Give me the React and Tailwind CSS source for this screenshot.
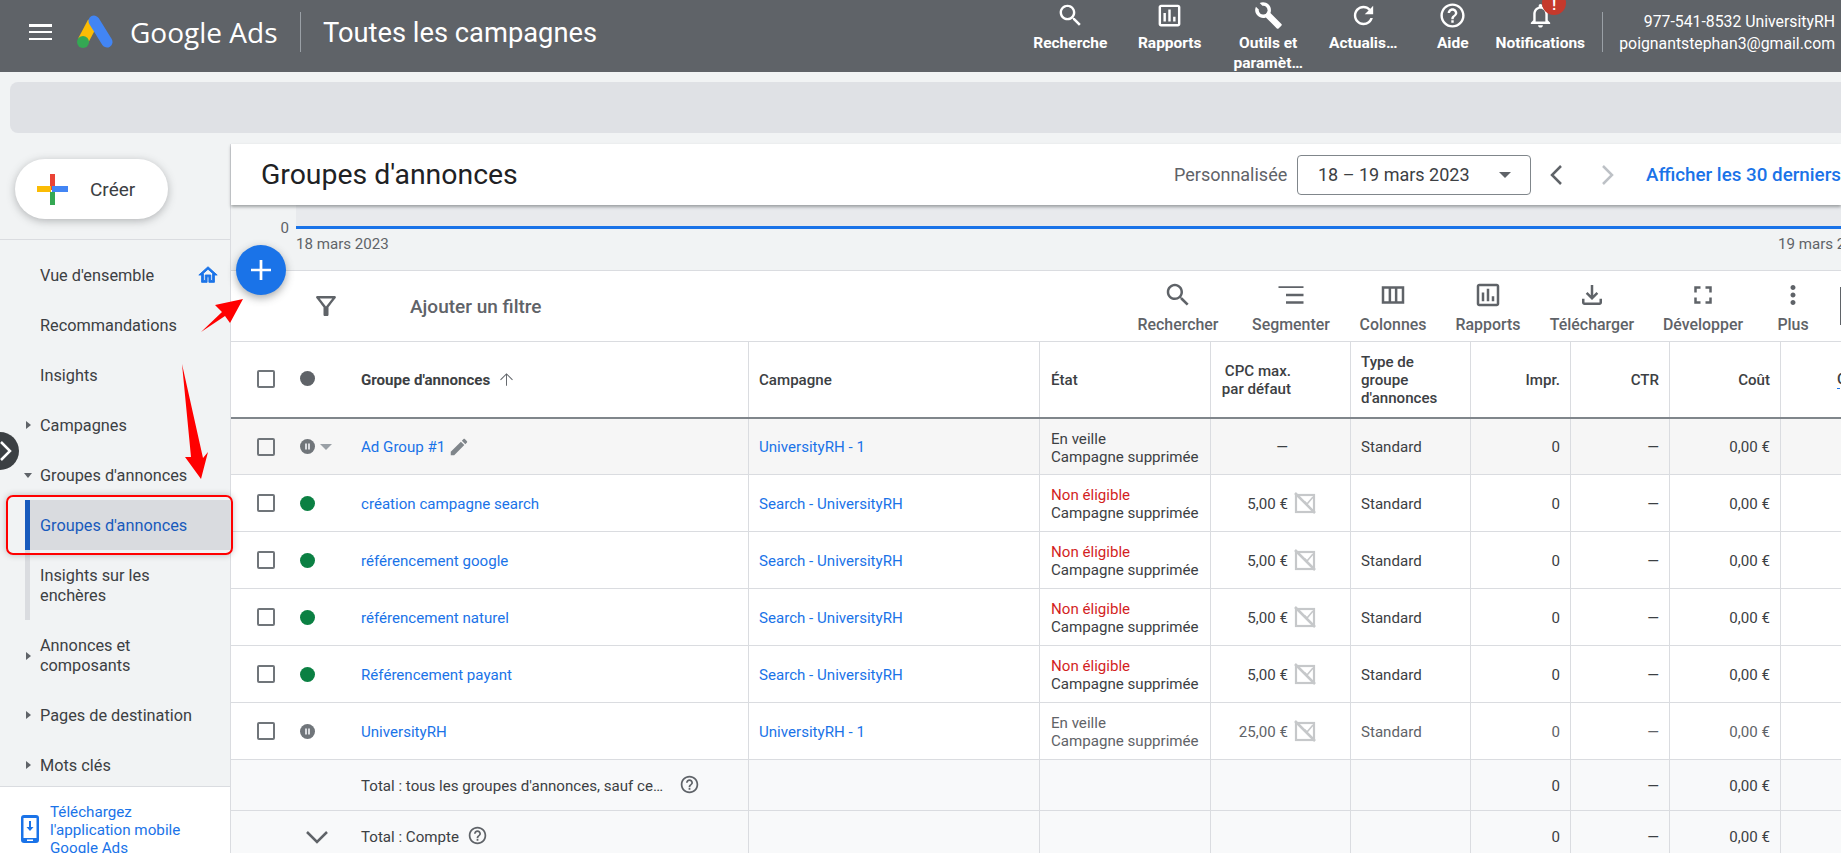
import React from "react";

const P = {
  search: "M15.5 14h-.79l-.28-.27C15.41 12.59 16 11.11 16 9.5 16 5.91 13.09 3 9.5 3S3 5.91 3 9.5 5.91 16 9.5 16c1.61 0 3.09-.59 4.23-1.57l.27.28v.79l5 4.99L20.49 19l-4.99-5zm-6 0C7.01 14 5 11.99 5 9.5S7.01 5 9.5 5 14 7.01 14 9.5 11.99 14 9.5 14z",
  report: "M19 3H5c-1.1 0-2 .9-2 2v14c0 1.1.9 2 2 2h14c1.1 0 2-.9 2-2V5c0-1.1-.9-2-2-2zm0 16H5V5h14v14zM7 10h2v7H7zM11 7h2v10h-2zM15 13h2v4h-2z",
  wrench: "M22.7 19l-9.1-9.1c.9-2.3.4-5-1.5-6.9-2-2-5-2.4-7.4-1.3L9 6 6 9 1.6 4.7C.4 7.1.9 10.1 2.9 12.1c1.9 1.9 4.6 2.4 6.9 1.5l9.1 9.1c.4.4 1 .4 1.4 0l2.3-2.3c.5-.4.5-1.1.1-1.4z",
  refresh: "M17.65 6.35C16.2 4.9 14.21 4 12 4c-4.42 0-7.99 3.58-7.99 8s3.57 8 7.99 8c3.73 0 6.84-2.55 7.73-6h-2.08c-.82 2.33-3.04 4-5.65 4-3.31 0-6-2.69-6-6s2.69-6 6-6c1.66 0 3.14.69 4.22 1.78L13 11h7V4l-2.35 2.35z",
  help: "M11 18h2v-2h-2v2zm1-16C6.48 2 2 6.48 2 12s4.48 10 10 10 10-4.48 10-10S17.52 2 12 2zm0 18c-4.41 0-8-3.59-8-8s3.59-8 8-8 8 3.59 8 8-3.59 8-8 8zm0-14c-2.21 0-4 1.79-4 4h2c0-1.1.9-2 2-2s2 .9 2 2c0 2-3 1.75-3 5h2c0-2.25 3-2.5 3-5 0-2.21-1.79-4-4-4z",
  bell: "M12 22c1.1 0 2-.9 2-2h-4c0 1.1.9 2 2 2zm6-6v-5c0-3.07-1.63-5.64-4.5-6.32V4c0-.83-.67-1.5-1.5-1.5s-1.5.67-1.5 1.5v.68C7.64 5.36 6 7.92 6 11v5l-2 2v1h16v-1l-2-2zm-2 1H8v-6c0-2.48 1.51-4.5 4-4.5s4 2.02 4 4.5v6z",
  filter: "M7 6h10l-5.01 6.3L7 6zm-2.75-.39C6.27 8.2 10 13 10 13v6c0 .55.45 1 1 1h2c.55 0 1-.45 1-1v-6s3.72-4.8 5.74-7.39C20.25 4.95 19.78 4 18.95 4H5.04c-.83 0-1.3.95-.79 1.61z",
  segment: "M2 5h20v1.400H2zM8 11h14v2H8zM8 17h14v2H8z",
  columns: "M3 5h18v14H3zM5 7v10h3.500V7zM10.500 7v10h3V7zM15.500 7v10H19V7z",
  download: "M18 15v3H6v-3H4v3c0 1.1.9 2 2 2h12c1.1 0 2-.9 2-2v-3h-2zm-1-4l-1.41-1.41L13 12.17V4h-2v8.17L8.41 9.59 7 11l5 5 5-5z",
  expand: "M7 14H5v5h5v-2H7v-3zm-2-4h2V7h3V5H5v5zm12 7h-3v2h5v-5h-2v3zM14 5v2h3v3h2V5h-5z",
  more: "M12 8c1.1 0 2-.9 2-2s-.9-2-2-2-2 .9-2 2 .9 2 2 2zm0 2c-1.1 0-2 .9-2 2s.9 2 2 2 2-.9 2-2-.9-2-2-2zm0 6c-1.1 0-2 .9-2 2s.9 2 2 2 2-.9 2-2-.9-2-2-2z",
  up: "M4 12l.9.9L11.4 6.4V20h1.2V6.4l6.5 6.5.9-.9-8-8-8 8z",
  edit: "M3 17.25V21h3.75L17.81 9.94l-3.75-3.75L3 17.25zM20.71 7.04c.39-.39.39-1.02 0-1.41l-2.34-2.34c-.39-.39-1.02-.39-1.41 0l-1.83 1.83 3.75 3.75 1.83-1.83z",
  home: "M12 5.69l5 4.5V18h-2v-6H9v6H7v-7.81l5-4.5M12 3L2 12h3v8h6v-6h2v6h6v-8h3L12 3z",
};

function Icon({ d, className, hole }) {
  return (
    <svg viewBox="0 0 24 24" fill="currentColor" className={className}>
      <path d={d} />
      {hole && <circle cx="7.6" cy="7.6" r="3.6" fill={hole} />}
    </svg>
  );
}

function AdsLogo() {
  return (
    <svg viewBox="0 0 36 33" className="w-[36px] h-[33px] shrink-0">
      <line x1="16" y1="7" x2="6" y2="26" stroke="#fbbc04" strokeWidth="11" />
      <line x1="17" y1="6" x2="30" y2="27" stroke="#4285f4" strokeWidth="11" strokeLinecap="round" />
      <circle cx="6" cy="27" r="6" fill="#34a853" />
    </svg>
  );
}

function CreatePlus() {
  return (
    <svg viewBox="0 0 31 31" className="w-[31px] h-[31px] shrink-0">
      <rect x="13" y="0" width="5" height="16" fill="#ea4335" />
      <rect x="0" y="12" width="14" height="6" fill="#fbbc04" />
      <rect x="13" y="18" width="5" height="13" fill="#34a853" />
      <rect x="15" y="12" width="16" height="6" fill="#4285f4" />
    </svg>
  );
}

function NoBid() {
  return (
    <svg viewBox="0 0 22 22" className="w-[22px] h-[22px] shrink-0" fill="none" stroke="#c6c8ca" strokeWidth="2.2">
      <rect x="2" y="3" width="18" height="17" />
      <path d="M1 1l20 20" strokeWidth="2.5" />
      <path d="M19 5l-6 7-2.500-2.500" strokeWidth="1.6" />
    </svg>
  );
}

function PausedDot({ color }) {
  return (
    <svg viewBox="0 0 15 15" className="w-[15px] h-[15px] shrink-0">
      <circle cx="7.5" cy="7.5" r="7.5" fill={color} />
      <rect x="5" y="4.5" width="2" height="6" fill="#dadce0" />
      <rect x="8" y="4.5" width="2" height="6" fill="#dadce0" />
    </svg>
  );
}

const headerItems = [
  { label: "Recherche", d: P.search, w: "w-[100px]" },
  { label: "Rapports", d: P.report, w: "w-[99px]" },
  { label: "Outils et\nparamèt…", d: P.wrench, w: "w-[98px]", hole: "#5f6368" },
  { label: "Actualis…", d: P.refresh, w: "w-[92px]" },
  { label: "Aide", d: P.help, w: "w-[87px]" },
  { label: "Notifications", d: P.bell, w: "w-[88px]", badge: true },
];

const tools = [
  { label: "Rechercher", d: P.search, w: "w-[112px]" },
  { label: "Segmenter", d: P.segment, w: "w-[114px]" },
  { label: "Colonnes", d: P.columns, w: "w-[90px]" },
  { label: "Rapports", d: P.report, w: "w-[100px]" },
  { label: "Télécharger", d: P.download, w: "w-[108px]" },
  { label: "Développer", d: P.expand, w: "w-[114px]" },
  { label: "Plus", d: P.more, w: "w-[66px]" },
];

const nav = [
  { label: "Vue d'ensemble", h: "h-[50px]", home: true },
  { label: "Recommandations", h: "h-[50px]" },
  { label: "Insights", h: "h-[50px]" },
  { label: "Campagnes", h: "h-[50px]", arrow: "right" },
  { label: "Groupes d'annonces", h: "h-[51px]", arrow: "down" },
  { label: "Groupes d'annonces", h: "h-[50px]", active: true },
  { label: "Insights sur les enchères", h: "h-[70px]", rail: true },
  { label: "Annonces et composants", h: "h-[69px]", arrow: "right" },
  { label: "Pages de destination", h: "h-[50px]", arrow: "right" },
  { label: "Mots clés", h: "h-[50px]", arrow: "right" },
];

const rows = [
  { name: "Ad Group #1", camp: "UniversityRH - 1", state: "En veille", cpc: "—", status: "pausedDark", bg: "bg-[#f6f6f6]", h: "h-[56px]", edit: true },
  { name: "création campagne search", camp: "Search - UniversityRH", state: "Non éligible", cpc: "5,00 €", status: "ok" },
  { name: "référencement google", camp: "Search - UniversityRH", state: "Non éligible", cpc: "5,00 €", status: "ok" },
  { name: "référencement naturel", camp: "Search - UniversityRH", state: "Non éligible", cpc: "5,00 €", status: "ok" },
  { name: "Référencement payant", camp: "Search - UniversityRH", state: "Non éligible", cpc: "5,00 €", status: "ok" },
  { name: "UniversityRH", camp: "UniversityRH - 1", state: "En veille", cpc: "25,00 €", status: "paused", muted: true },
];

const cols = "grid grid-cols-[518px_291px_171px_140px_120px_100px_99px_111px_60px]";
const cell = "border-r border-[#dadce0] flex items-center pt-[2px]";
const headCell = "border-r border-[#dadce0] flex items-center";

function Check() {
  return <span className="w-[18px] h-[18px] shrink-0 border-2 border-[#70757a] rounded-[2px] -translate-y-[1px]" />;
}

function Row({ r }) {
  const tone = r.muted ? "text-[#5f6368]" : "text-[#3c4043]";
  return (
    <div className={`${cols} ${r.h || "h-[57px]"} ${r.bg || "bg-white"} border-b border-[#dadce0] ${tone}`}>
      <div className={`${cell} pl-[26px]`}>
        <Check />
        <span className="ml-[25px] w-[15px] h-[15px] flex -translate-y-[1px]">
          {r.status === "ok" && <span className="w-[15px] h-[15px] rounded-full bg-[#0b8043]" />}
          {r.status !== "ok" && <PausedDot color="#70757a" />}
        </span>
        <span className="w-[46px] pl-[5px] flex -translate-y-[1px]">
          {r.edit && <span className="w-0 h-0 border-x-[6px] border-x-transparent border-t-[6px] border-t-[#9aa0a6]" />}
        </span>
        <a className="text-[#1a73e8]">{r.name}</a>
        {r.edit && <Icon d={P.edit} className="w-[22px] h-[22px] ml-[3px] text-[#80868b] -translate-y-[1px]" />}
      </div>
      <div className={`${cell} pl-[10px] text-[#1a73e8]`}>{r.camp}</div>
      <div className={`${cell} pl-[11px]`}>
        <div className="leading-[18px]">
          <div className={r.state === "Non éligible" ? "text-[#d31f1f]" : ""}>{r.state}</div>
          <div>Campagne supprimée</div>
        </div>
      </div>
      <div className={`${cell} justify-end pr-[62px] relative`}>
        {r.cpc}
        {r.cpc !== "—" && <span className="absolute left-[83px] top-[17px]"><NoBid /></span>}
      </div>
      <div className={`${cell} pl-[10px]`}>Standard</div>
      <div className={`${cell} justify-end pr-[10px]`}>0</div>
      <div className={`${cell} justify-end pr-[10px]`}>—</div>
      <div className={`${cell} justify-end pr-[10px]`}>0,00 €</div>
      <div />
    </div>
  );
}

function TotalRow({ children }) {
  return (
    <div className={`${cols} h-[51px] bg-[#f8f9fa] border-b border-[#dadce0] text-[#3c4043]`}>
      <div className={`${cell} pl-[130px] relative`}>{children}</div>
      <div className={cell} />
      <div className={cell} />
      <div className={cell} />
      <div className={cell} />
      <div className={`${cell} justify-end pr-[10px]`}>0</div>
      <div className={`${cell} justify-end pr-[10px]`}>—</div>
      <div className={`${cell} justify-end pr-[10px]`}>0,00 €</div>
      <div />
    </div>
  );
}

export default function App() {
  return (
    <div className="relative w-[1841px] h-[853px] overflow-hidden bg-[#f1f3f4] flex flex-col font-['Roboto',sans-serif] text-[15.1px]">
      {/* top bar */}
      <header className="h-[72px] shrink-0 bg-[#5f6368] text-white flex items-start">
        <div className="pl-[29px] pt-[24px] w-[77px] shrink-0">
          <div className="w-[23px] h-[16px] flex flex-col justify-between">
            <span className="h-[2.5px] bg-white" />
            <span className="h-[2.5px] bg-white" />
            <span className="h-[2.5px] bg-white" />
          </div>
        </div>
        <div className="pt-[15px]"><AdsLogo /></div>
        <span className="ml-[17px] pt-[14px] text-[28px] leading-[36px] font-['Open_Sans',sans-serif] w-[170px] shrink-0 whitespace-nowrap">Google Ads</span>
        <span className="mt-[12px] h-[40px] w-px bg-[#9aa0a6]" />
        <span className="ml-[22px] pt-[15px] text-[27.3px] leading-[36px] whitespace-nowrap">Toutes les campagnes</span>
        <div className="ml-auto flex items-start pr-[6px]">
          {headerItems.map((it) => (
            <div key={it.label} className={`${it.w} relative flex flex-col items-center text-center`}>
              <Icon d={it.d} hole={it.hole} className="w-[29px] h-[29px] mt-[1px]" />
              <span className="mt-[3px] font-bold text-[15.5px] leading-[20px] whitespace-pre">{it.label}</span>
              {it.badge && (
                <span className="absolute left-[46px] top-[-9px] w-[24px] h-[24px] rounded-full bg-[#c5392c] text-center text-[14px] font-bold leading-[28px]">!</span>
              )}
            </div>
          ))}
          <span className="ml-[18px] mt-[12px] h-[40px] w-px bg-[#9aa0a6]" />
          <div className="ml-[16px] pt-[11px] text-right leading-[22px] text-[15.8px] whitespace-nowrap">
            <div>977-541-8532 UniversityRH</div>
            <div>poignantstephan3@gmail.com</div>
          </div>
        </div>
      </header>

      {/* notification strip */}
      <div className="ml-[10px] mt-[10px] mb-[11px] h-[51px] shrink-0 rounded-l-[8px] bg-[#dfe1e5]" />

      <div className="flex flex-1 min-h-0">
        {/* sidebar */}
        <aside className="w-[231px] shrink-0 border-r border-[#dadce0] flex flex-col">
          <div className="h-[96px] shrink-0 border-b border-[#dadce0] pt-[15px] pl-[15px]">
            <div className="w-[153px] h-[60px] rounded-full bg-white shadow-[0_2px_8px_rgba(60,64,67,0.35)] flex items-center pl-[22px]">
              <CreatePlus />
              <span className="ml-[22px] pt-[2px] text-[19px] text-[#3c4043]">Créer</span>
            </div>
          </div>
          <nav className="flex-1 min-h-0 overflow-hidden pt-[9px] text-[#3c4043] text-[16.3px] leading-[20px]">
            {nav.map((n, i) => (
              <div key={i} className={`${n.h} relative flex items-center pl-[40px] ${n.active ? "text-[#185abc]" : ""}`}>
                {n.active && <span className="absolute left-[25px] right-0 top-0 bottom-0 bg-[#d9dbdf]" />}
                {n.active && <span className="absolute left-[25px] w-[5px] top-0 bottom-0 bg-[#185abc]" />}
                {n.rail && <span className="absolute left-[25px] w-[5px] top-0 bottom-0 bg-[#dadce0]" />}
                {n.arrow === "right" && <span className="absolute left-[26px] mt-[2px] w-0 h-0 border-y-[4.5px] border-y-transparent border-l-[5px] border-l-[#5f6368]" />}
                {n.arrow === "down" && <span className="absolute left-[24px] mt-[2px] w-0 h-0 border-x-[4.5px] border-x-transparent border-t-[5px] border-t-[#5f6368]" />}
                <span className={`relative w-[160px] ${n.active || n.rail ? "mt-[1px]" : "mt-[3px]"}`}>{n.label}</span>
                {n.home && (
                  <svg viewBox="0 0 24 24" className="absolute left-[197px] mt-[2px] w-[22px] h-[22px] text-[#1a73e8]" fill="currentColor" stroke="currentColor" strokeWidth="1">
                    <path d={P.home} />
                  </svg>
                )}
              </div>
            ))}
          </nav>
          <div className="h-[67px] shrink-0 bg-white border-t border-[#dadce0] flex overflow-hidden">
            <div className="pl-[21px] pt-[28px] w-[50px] shrink-0">
              <svg viewBox="0 0 18 28" className="w-[18px] h-[28px]">
                <rect width="18" height="28" rx="3" fill="#1a73e8" />
                <rect x="2.5" y="3" width="13" height="20" fill="#fff" />
                <path d="M8 6h2v6h2.5L9 16l-3.500-4H8z" fill="#1a73e8" />
                <rect x="6" y="24.500" width="6" height="1.500" fill="#fff" />
              </svg>
            </div>
            <div className="pt-[16px] text-[15.2px] leading-[18px] text-[#1a73e8]">
              Téléchargez<br />l'application mobile<br />Google Ads
            </div>
          </div>
        </aside>

        {/* main */}
        <main className="flex-1 min-w-0 flex flex-col">
          <div className="relative z-10 h-[61px] shrink-0 bg-white shadow-[0_2px_3px_rgba(60,64,67,0.45)] flex items-center">
            <h1 className="pl-[30px] pt-[2px] flex-1 text-[28.4px] text-[#202124] whitespace-nowrap">Groupes d'annonces</h1>
            <div className="w-[667px] shrink-0 flex items-center overflow-hidden whitespace-nowrap">
              <span className="text-[18px] text-[#5f6368] w-[123px] shrink-0">Personnalisée</span>
              <div className="w-[234px] h-[40px] shrink-0 border border-[#80868b] rounded-[4px] flex items-center pl-[20px] text-[18px] text-[#3c4043]">
                18 – 19 mars 2023
                <span className="ml-auto mr-[19px] w-0 h-0 border-x-[6px] border-x-transparent border-t-[6px] border-t-[#5f6368]" />
              </div>
              <svg viewBox="0 0 14 20" className="ml-[18px] w-[14px] h-[20px] shrink-0" fill="none" stroke="#5f6368" strokeWidth="2.5"><path d="M12 1L3 10l9 9" /></svg>
              <svg viewBox="0 0 14 20" className="ml-[38px] w-[14px] h-[20px] shrink-0" fill="none" stroke="#bdc1c6" strokeWidth="2.5"><path d="M2 1l9 9-9 9" /></svg>
              <span className="ml-[31px] pt-[2px] text-[18.8px] font-medium text-[#1a73e8]">Afficher les 30 derniers</span>
            </div>
          </div>

          <div className="h-[66px] shrink-0 flex border-b border-[#dadce0] bg-[#f1f3f4] text-[#5f6368]">
            <div className="w-[58px] shrink-0 pt-[13px] text-right leading-[20px]">0</div>
            <div className="ml-[7px] flex-1 min-w-0">
              <div className="h-[21px] bg-[#e8eaed] border-b-[3px] border-[#1a73e8] box-content" />
              <div className="flex justify-between pt-[5px] leading-[20px]">
                <span>18 mars 2023</span>
                <span className="w-[63px] overflow-hidden whitespace-nowrap">19 mars 2023</span>
              </div>
            </div>
          </div>

          <div className="h-[71px] shrink-0 bg-white flex border-b border-[#dadce0]">
            <div className="pl-[80px] pt-[20px] w-[179px] shrink-0">
              <Icon d={P.filter} className="w-[30px] h-[30px] text-[#5f6368]" />
            </div>
            <span className="pt-[22px] text-[19px] font-medium text-[#5f6368] whitespace-nowrap">Ajouter un filtre</span>
            <div className="ml-auto flex items-start">
              {tools.map((t) => (
                <div key={t.label} className={`${t.w} flex flex-col items-center`}>
                  <Icon d={t.d} className="w-[30px] h-[30px] mt-[9px] text-[#5f6368]" />
                  <span className="mt-[5px] text-[15.9px] font-medium text-[#5f6368] leading-[20px] whitespace-nowrap">{t.label}</span>
                </div>
              ))}
              <span className="ml-[14px] mt-[16px] h-[38px] w-px bg-[#5f6368]" />
            </div>
          </div>

          <div className="flex-1 min-h-0 overflow-hidden bg-white">
            <div className={`${cols} h-[75px] border-b-[3px] border-[#80868b] box-content -mb-px text-[#3c4043] font-medium leading-[18px]`}>
              <div className={`${headCell} pl-[26px]`}>
                <Check />
                <span className="ml-[25px] w-[15px] h-[15px] rounded-full bg-[#5f6368] -translate-y-[1px]" />
                <span className="ml-[46px] font-bold">Groupe d'annonces</span>
                <Icon d={P.up} className="ml-[7px] w-[19px] h-[19px] text-[#5f6368]" />
              </div>
              <div className={`${headCell} pl-[10px]`}>Campagne</div>
              <div className={`${headCell} pl-[11px]`}>État</div>
              <div className={`${headCell} justify-end pr-[59px] text-right`}>CPC max.<br />par défaut</div>
              <div className={`${headCell} pl-[10px]`}>Type de<br />groupe<br />d'annonces</div>
              <div className={`${headCell} justify-end pr-[10px]`}>Impr.</div>
              <div className={`${headCell} justify-end pr-[10px]`}>CTR</div>
              <div className={`${headCell} justify-end pr-[10px]`}>Coût</div>
              <div className="flex items-center pl-[56px] whitespace-nowrap overflow-hidden">
                <span className="border-b border-dashed border-[#1a73e8]">Conv.</span>
              </div>
            </div>
            {rows.map((r) => <Row key={r.name} r={r} />)}
            <TotalRow>
              Total : tous les groupes d'annonces, sauf ce…
              <Icon d={P.help} className="ml-[16px] w-[21px] h-[21px] text-[#5f6368] -translate-y-[2px]" />
            </TotalRow>
            <TotalRow>
              <svg viewBox="0 0 22 14" className="absolute left-[75px] w-[22px] h-[14px]" fill="none" stroke="#5f6368" strokeWidth="2.5"><path d="M1 2l10 10L21 2" /></svg>
              Total : Compte
              <Icon d={P.help} className="ml-[8px] w-[21px] h-[21px] text-[#5f6368] -translate-y-[2px]" />
            </TotalRow>
          </div>
        </main>
      </div>

      {/* overlays */}
      <button className="absolute left-[236px] top-[245px] z-20 w-[50px] h-[50px] rounded-full bg-[#1a73e8] shadow-[0_3px_8px_rgba(60,64,67,0.45)] flex items-center justify-center">
        <svg viewBox="0 0 22 22" className="w-[20px] h-[20px]" fill="#fff"><path d="M9.500 0h3v9.500H22v3h-9.500V22h-3v-9.500H0v-3h9.500z" /></svg>
      </button>
      <span className="absolute left-[-19px] top-[432px] z-20 w-[38px] h-[38px] rounded-full bg-[#3c4043] flex items-center justify-end pr-[7px]">
        <svg viewBox="0 0 12 20" className="w-[12px] h-[20px]" fill="none" stroke="#fff" strokeWidth="2.5"><path d="M1 1l9 9-9 9" /></svg>
      </span>
      <div className="absolute left-[6px] top-[495px] z-20 w-[227px] h-[60px] rounded-[7px] border-2 border-[#f00] shadow-[0_0_6px_rgba(60,64,67,0.3)]" />
      <svg className="absolute left-0 top-0 z-20 w-[1841px] h-[853px] pointer-events-none" viewBox="0 0 1841 853" fill="#f00">
        <path d="M201 332l21-20-7-7 28-6-13 24-5-7z" />
        <path d="M182 364L203 458l5-6-7 27-16-22 6 0z" />
      </svg>
    </div>
  );
}
